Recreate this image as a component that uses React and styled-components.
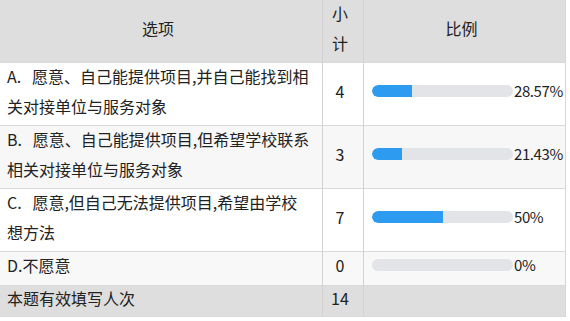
import React from "react";
import styled, { createGlobalStyle } from "styled-components";

const GlobalStyle = createGlobalStyle`
    html, body {
        margin: 0;
        padding: 0;
        background: #fff;
    }
    body {
        font-family: "Noto Sans CJK SC", "Liberation Sans", sans-serif;
        color: #222;
    }
`;

// 표 전체를 grid 로 잡음 (열 너비는 테두리 포함)
const Grid = styled.div`
    display: grid;
    grid-template-columns: 323px 41px 202px;
    width: 566px;
    font-size: 16px;
    line-height: 30px;
`;

const Cell = styled.div`
    display: flex;
    flex-direction: column;
    justify-content: center;
    align-items: ${(p) => (p.$center ? "center" : "stretch")};
    height: ${(p) => p.$height}px;
    box-sizing: border-box;
    padding: 0 ${(p) => (p.$bar ? 0 : 6)}px 7px ${(p) => (p.$bar ? 8 : p.$center ? 0 : 7)}px;
    background: ${(p) => p.$bg};
    border-bottom: 1px solid #d9d9d9;
    border-right: ${(p) => (p.$last ? "1px solid #d6d6d6" : "1px solid #d2d2d2")};
    overflow: visible;
    white-space: nowrap;
`;

const BarWrap = styled.div`
    display: flex;
    align-items: center;
`;

const Track = styled.div`
    width: 141px;
    height: 12px;
    border-radius: 6px;
    background: #e3e4e8;
    overflow: hidden;
`;

const Fill = styled.div`
    height: 100%;
    background: #2d9bf0;
    border-radius: 6px 0 0 6px;
`;

const Percent = styled.span`
    margin-left: 1px;
    font-size: 15px;
    letter-spacing: -0.4px;
`;

const HEAD_BG = "#dedede";

const rows = [
    { lines: ["A.\u00a0\u00a0 愿意、自己能提供项目,并自己能找到相", "关对接单位与服务对象"], count: 4, pct: 28.57, label: "28.57%", height: 63 },
    { lines: ["B.\u00a0\u00a0 愿意、自己能提供项目,但希望学校联系", "相关对接单位与服务对象"], count: 3, pct: 21.43, label: "21.43%", height: 63, bg: "#f7f7f7" },
    { lines: ["C.\u00a0\u00a0 愿意,但自己无法提供项目,希望由学校", "想方法"], count: 7, pct: 50, label: "50%", height: 63 },
    { lines: ["D.不愿意"], count: 0, pct: 0, label: "0%", height: 34, bg: "#f8f8f8" },
];

export default function App() {
    return (
        <>
            <GlobalStyle />
            <Grid>
                <Cell $height={63} $bg={HEAD_BG} $center>
                    选项
                </Cell>
                <Cell $height={63} $bg={HEAD_BG} $center>
                    <span>小</span>
                    <span>计</span>
                </Cell>
                <Cell $height={63} $bg={HEAD_BG} $center $last>
                    比例
                </Cell>

                {rows.map((r, i) => (
                    <React.Fragment key={i}>
                        <Cell $height={r.height} $bg={r.bg || "#fff"}>
                            {r.lines.map((l, j) => (
                                <div key={j}>{l}</div>
                            ))}
                        </Cell>
                        <Cell $height={r.height} $bg={r.bg || "#fff"} $center>
                            {r.count}
                        </Cell>
                        <Cell $height={r.height} $bg={r.bg || "#fff"} $bar $last>
                            <BarWrap>
                                <Track>
                                    <Fill style={{ width: `${r.pct}%` }} />
                                </Track>
                                <Percent>{r.label}</Percent>
                            </BarWrap>
                        </Cell>
                    </React.Fragment>
                ))}

                <Cell $height={31} $bg={HEAD_BG}>
                    本题有效填写人次
                </Cell>
                <Cell $height={31} $bg={HEAD_BG} $center>
                    14
                </Cell>
                <Cell $height={31} $bg={HEAD_BG} $last />
            </Grid>
        </>
    );
}
